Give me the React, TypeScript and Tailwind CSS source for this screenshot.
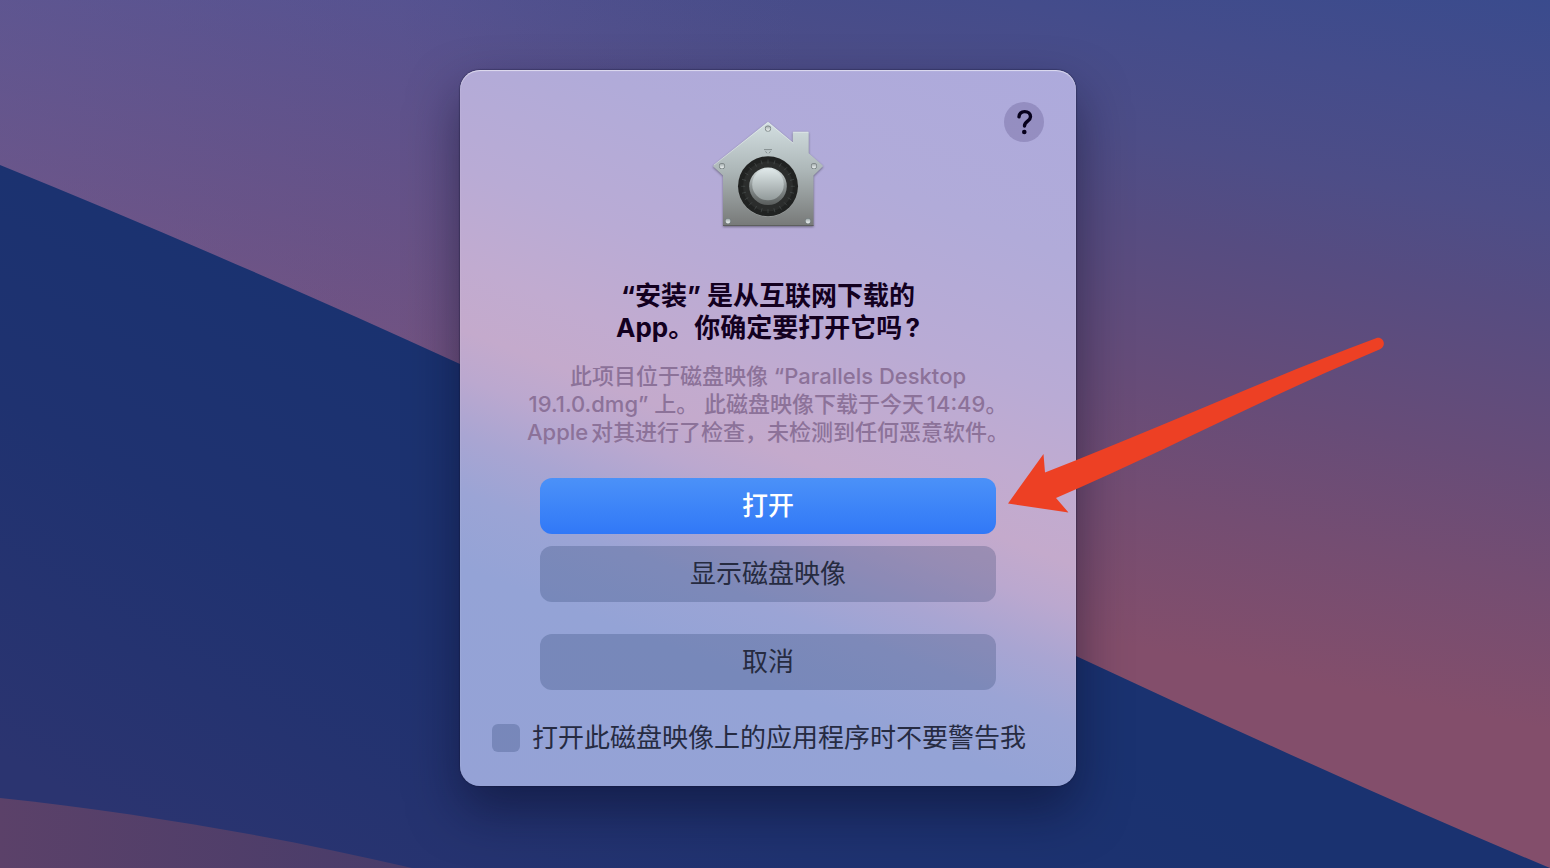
import { useId } from "react";

const dialTicks = Array.from({ length: 24 }, (_, i) => i * 15);

const screws = [
  { x: 64, y: 18.5 },
  { x: 18, y: 56 },
  { x: 110, y: 56 },
  { x: 24, y: 111 },
  { x: 104, y: 111 },
];

function Wallpaper() {
  return (
    <svg
      aria-hidden="true"
      className="absolute inset-0 h-full w-full"
      viewBox="0 0 1550 868"
      preserveAspectRatio="none"
    >
      <defs>
        <linearGradient id="sky" gradientUnits="userSpaceOnUse" x1="1550" y1="0" x2="1410" y2="702">
          <stop offset="0" stopColor="#3a4b8d" />
          <stop offset="0.15" stopColor="#444c8b" />
          <stop offset="0.3" stopColor="#4d4d87" />
          <stop offset="0.42" stopColor="#564c81" />
          <stop offset="0.64" stopColor="#674c78" />
          <stop offset="0.8" stopColor="#744d72" />
          <stop offset="1" stopColor="#834e6b" />
        </linearGradient>
        <linearGradient id="haze" gradientUnits="userSpaceOnUse" x1="0" y1="0" x2="800" y2="0">
          <stop offset="0" stopColor="#6a64a8" stopOpacity="0.4" />
          <stop offset="0.5" stopColor="#6a60a8" stopOpacity="0.3" />
          <stop offset="1" stopColor="#5a5aa0" stopOpacity="0" />
        </linearGradient>
        <linearGradient id="wave" gradientUnits="userSpaceOnUse" x1="480" y1="380" x2="200" y2="868">
          <stop offset="0" stopColor="#1a3270" />
          <stop offset="0.45" stopColor="#1f3270" />
          <stop offset="1" stopColor="#2b3470" />
        </linearGradient>
        <linearGradient id="shore" x1="0" y1="0.6" x2="1" y2="0.6">
          <stop offset="0" stopColor="#5b4169" />
          <stop offset="1" stopColor="#483c6a" />
        </linearGradient>
      </defs>
      <rect width="1550" height="868" fill="url(#sky)" />
      <rect width="800" height="600" fill="url(#haze)" />
      <path d="M0 165 C150 226 305 293 460 364 C670 460 870 558 1076 656 C1235 730 1395 803 1550 868 H0Z" fill="url(#wave)" />
      <path d="M0 798 C140 813 280 837 412 868 H0Z" fill="url(#shore)" />
    </svg>
  );
}

function GatekeeperIcon() {
  return (
    <svg aria-hidden="true" className="size-32 shrink-0 drop-shadow-[0_1px_1px_rgba(0,0,0,0.4)]" viewBox="0 0 128 128">
      <defs>
        <linearGradient id="metal" x1="0" y1="0" x2="0" y2="1">
          <stop offset="0" stopColor="#d3dfe1" />
          <stop offset="0.45" stopColor="#aeb8b9" />
          <stop offset="1" stopColor="#777978" />
        </linearGradient>
        <linearGradient id="knobRim" x1="0" y1="0" x2="0" y2="1">
          <stop offset="0" stopColor="#dce5e5" />
          <stop offset="0.5" stopColor="#8b9292" />
          <stop offset="1" stopColor="#595d5c" />
        </linearGradient>
        <linearGradient id="knob" x1="0" y1="0" x2="0" y2="1">
          <stop offset="0" stopColor="#dfe8e9" />
          <stop offset="1" stopColor="#929a9a" />
        </linearGradient>
        <linearGradient id="screw" x1="0" y1="0" x2="0" y2="1">
          <stop offset="0" stopColor="#a3acad" />
          <stop offset="1" stopColor="#f0f5f5" />
        </linearGradient>
      </defs>
      <path
        d="M63 12.6 Q64 11.6 65 12.6 L88.800 32.500 V22.500 Q88.800 21.800 89.500 21.800 H104 Q104.700 21.800 104.700 22.500 V43.300 L118.500 55.200 Q119.300 56 118.500 56.800 L109.500 65.500 V115.500 Q109.500 116 109 116 H19.500 Q19 116 19 115.500 V65.500 L9.500 56.800 Q8.700 56 9.500 55.200Z"
        fill="url(#metal)"
      />
      <path d="M10 55 L64 12.500 L89.200 33.200 M89.200 22.300 H104.300" fill="none" stroke="#eef4f5" strokeOpacity="0.6" strokeWidth="0.8" />
      <path d="M19 115.500 H109.500" stroke="#5d5f5e" strokeWidth="1" />
      <path d="M60 39.600 H68 M61.500 41.300 L63 43.300 M66.500 41.300 L65 43.300" fill="none" stroke="#7d8788" strokeWidth="0.9" />
      <circle cx="64" cy="76.800" r="30" fill="#c9cfcf" fillOpacity="0.45" />
      <circle cx="64" cy="76.300" r="30" fill="#202221" />
      <circle cx="64" cy="76.300" r="25" fill="#2b2d2c" />
      {dialTicks.map((angle) => (
        <path
          key={angle}
          d="M64 49.500 V53.500"
          stroke="#5a6161"
          strokeOpacity="0.6"
          strokeWidth="0.7"
          transform={`rotate(${angle} 64 76.300)`}
        />
      ))}
      <circle cx="64" cy="76.300" r="18.800" fill="url(#knobRim)" />
      <circle cx="64" cy="74.500" r="15.800" fill="url(#knob)" />
      {screws.map(({ x, y }) => (
        <g key={`${x}-${y}`}>
          <circle cx={x} cy={y} r="3.100" fill="#788182" />
          <circle cx={x} cy={y + 0.1} r="2.400" fill="url(#screw)" />
        </g>
      ))}
    </svg>
  );
}

function PointerArrow() {
  return (
    <svg
      aria-hidden="true"
      className="pointer-events-none absolute top-[264px] left-[540px] h-[184px] w-[392px]"
      viewBox="1000 334 392 184"
    >
      <path
        d="M1008 503.500 L1043.500 454 L1045 472.500 C1160 428 1268 378 1376 338.200 C1381 336.500 1385 341 1383.500 345.500 C1383 347 1381.500 348.500 1380 349.300 C1268 396 1165 451 1056 498 L1068.500 512.500Z"
        fill="#ed4024"
      />
    </svg>
  );
}

const secondaryButton = "h-14 rounded-xl bg-[#051c4b]/20 text-[26px] leading-8 text-[#262b40]";

export default function App() {
  const titleId = useId();
  const messageId = useId();

  return (
    <main className="relative flex min-h-screen justify-center overflow-hidden bg-[#1d3271] pt-[70px] pr-[14px] pb-20 font-['Inter','Noto_Sans_CJK_SC',sans-serif] [text-autospace:normal]" lang="zh-CN">
      <Wallpaper />
      <section
        role="alertdialog"
        aria-labelledby={titleId}
        aria-describedby={messageId}
        className="relative flex w-full max-w-[616px] flex-col self-start rounded-[20px] bg-[linear-gradient(201deg,#adaadc_0%,#b1abd9_20%,#b9abd5_35%,#c1abd0_45%,#c4aacc_52%,#bba8cf_57%,#a9a5d2_63%,#9ba4d5_69%,#94a3d6_77%,#95a2d6_100%)] px-8 pt-10 pb-8 shadow-[inset_0_1px_1px_rgba(255,255,255,0.6),0_0_1px_1px_rgba(20,20,50,0.3),0_24px_50px_rgba(10,12,40,0.5)]"
      >
        <button
          type="button"
          aria-label="帮助"
          className="absolute top-8 right-8 flex size-10 items-center justify-center rounded-full bg-[#2b1f5a]/20"
        >
          <svg aria-hidden="true" className="size-10" viewBox="0 0 40 40">
            <path
              d="M15 14.800 C15.300 11.500 17.400 9.600 20.700 9.600 C24.200 9.600 26.500 11.700 26.500 14.700 C26.500 19 20.500 19.300 20.500 24"
              fill="none"
              stroke="#07001c"
              strokeWidth="3.400"
              strokeLinecap="round"
            />
            <circle cx="20.300" cy="30" r="2.300" fill="#07001c" />
          </svg>
        </button>

        <div className="flex justify-center">
          <GatekeeperIcon />
        </div>

        <h1 id={titleId} className="mt-[42px] text-center text-[26px] leading-8 font-bold text-[#13001f]">
          “安装” 是从互联网下载的
          <br />
          App。你确定要打开它吗?
        </h1>
        <p id={messageId} className="mt-[18px] text-center text-[22px] leading-7 font-medium text-[#8c7299]">
          此项目位于磁盘映像 “Parallels Desktop
          <br />
          19.1.0.dmg” 上。 此磁盘映像下载于今天14:49。
          <br />
          Apple对其进行了检查，未检测到任何恶意软件。
        </p>

        <div className="mt-8 flex flex-col px-12">
          <button
            type="button"
            className="h-14 rounded-xl bg-linear-to-b from-[#4b91f8] to-[#3178f7] text-[26px] leading-8 font-medium text-white"
          >
            打开
          </button>
          <button type="button" className={`mt-3 ${secondaryButton}`}>
            显示磁盘映像
          </button>
          <button type="button" className={`mt-8 ${secondaryButton}`}>
            取消
          </button>
        </div>

        <label className="mt-8 flex items-center gap-3 text-[26px] leading-8 text-[#262b42]">
          <input
            type="checkbox"
            className="size-7 shrink-0 appearance-none rounded-md bg-[#051c4b]/20 checked:bg-[#3178f7]"
          />
          打开此磁盘映像上的应用程序时不要警告我
        </label>

        <PointerArrow />
      </section>
    </main>
  );
}
